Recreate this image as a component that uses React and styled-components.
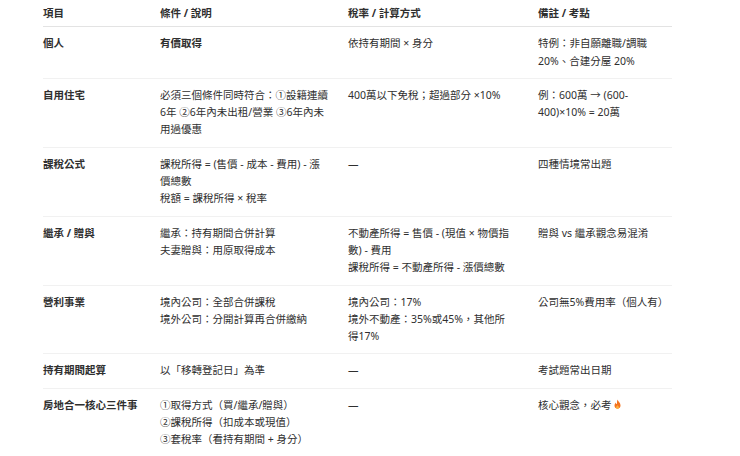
import React from "react";
import styled, { createGlobalStyle } from "styled-components";

const GlobalStyle = createGlobalStyle`
  html, body {
    margin: 0;
    padding: 0;
    background: #ffffff;
  }
  body {
    font-family: "Noto Sans", "Noto Sans CJK TC", sans-serif;
    color: #2f2f2f;
  }
`;

const Table = styled.div`
  width: 629px;
  margin-left: 43px;
  font-size: 10.5px;
  line-height: 17.3px;
`;

const Row = styled.div`
  display: grid;
  grid-template-columns: 117px 188px 190px 134px;
  padding: ${(p) => (p.$head ? "5px 0 4px" : "8px 0")};
  border-bottom: 1px solid ${(p) => (p.$head ? "#e3e3e3" : "#f1f1f1")};
  font-weight: ${(p) => (p.$head ? 700 : 400)};
`;

const Cell = styled.div`
  padding-right: 16px;
  font-weight: ${(p) => (p.$bold ? 700 : "inherit")};
  &:nth-child(2) {
    padding-right: 20px;
  }
  &:nth-child(3) {
    padding-right: 24px;
  }
  &:last-child {
    padding-right: 0;
  }
`;

const Line = styled.div``;

const Flame = () => (
  <svg
    width="9"
    height="11"
    viewBox="0 0 18 22"
    style={{ verticalAlign: "-1px", marginLeft: "1px" }}
  >
    <path
      d="M9 1c1 4 6 6 6 12a6 6 0 0 1-12 0c0-3 2-5 3-6 0 2 1 3 2 3 0-4 0-6 1-9z"
      fill="#f4731f"
    />
    <path
      d="M9 12c1 2 3 3 3 5a3 3 0 0 1-6 0c0-2 2-3 3-5z"
      fill="#fbb040"
    />
  </svg>
);

const rows = [
  {
    item: "個人",
    cond: [<strong key="a">有價取得</strong>],
    rate: ["依持有期間 × 身分"],
    note: ["特例：非自願離職/調職 20%、合建分屋 20%"],
  },
  {
    item: "自用住宅",
    cond: ["必須三個條件同時符合：①設籍連續6年 ②6年內未出租/營業 ③6年內未用過優惠"],
    rate: ["400萬以下免稅；超過部分 ×10%"],
    note: ["例：600萬 → (600-400)×10% = 20萬"],
  },
  {
    item: "課稅公式",
    cond: ["課稅所得 = (售價 - 成本 - 費用) - 漲價總數", "稅額 = 課稅所得 × 稅率"],
    rate: ["—"],
    note: ["四種情境常出題"],
  },
  {
    item: "繼承 / 贈與",
    cond: ["繼承：持有期間合併計算", "夫妻贈與：用原取得成本"],
    rate: ["不動產所得 = 售價 - (現值 × 物價指數) - 費用", "課稅所得 = 不動產所得 - 漲價總數"],
    note: ["贈與 vs 繼承觀念易混淆"],
  },
  {
    item: "營利事業",
    cond: ["境內公司：全部合併課稅", "境外公司：分開計算再合併繳納"],
    rate: ["境內公司：17%", "境外不動產：35%或45%，其他所得17%"],
    note: ["公司無5%費用率（個人有）"],
  },
  {
    item: "持有期間起算",
    cond: ["以「移轉登記日」為準"],
    rate: ["—"],
    note: ["考試題常出日期"],
  },
  {
    item: "房地合一核心三件事",
    cond: ["①取得方式（買/繼承/贈與）", "②課稅所得（扣成本或現值）", "③套稅率（看持有期間 + 身分）"],
    rate: ["—"],
    note: [<span key="n">核心觀念，必考<Flame /></span>],
  },
];

export default function App() {
  return (
    <>
      <GlobalStyle />
      <Table>
        <Row $head>
          <Cell>項目</Cell>
          <Cell>條件 / 說明</Cell>
          <Cell>稅率 / 計算方式</Cell>
          <Cell>備註 / 考點</Cell>
        </Row>
        {rows.map((r) => (
          <Row key={r.item}>
            <Cell $bold>{r.item}</Cell>
            <Cell>{r.cond.map((t, i) => <Line key={i}>{t}</Line>)}</Cell>
            <Cell>{r.rate.map((t, i) => <Line key={i}>{t}</Line>)}</Cell>
            <Cell>{r.note.map((t, i) => <Line key={i}>{t}</Line>)}</Cell>
          </Row>
        ))}
      </Table>
    </>
  );
}
